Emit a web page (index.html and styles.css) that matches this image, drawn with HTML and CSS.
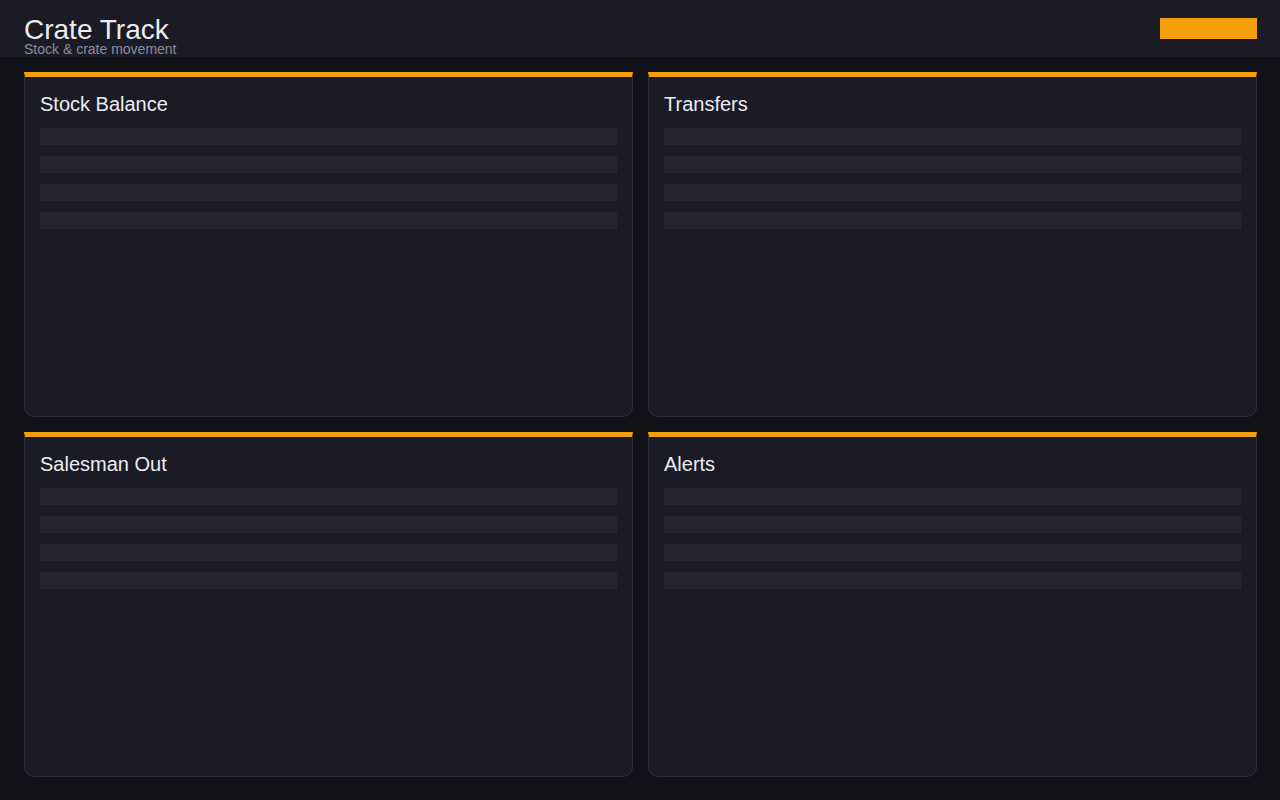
FILE: index.html
```html
<!DOCTYPE html>
<html lang="en">
<head>
<meta charset="utf-8">
<title>Crate Track</title>
<link rel="stylesheet" href="styles.css">
</head>
<body>
<header class="topbar">
  <div class="brand">
    <h1 class="brand-title">Crate Track</h1>
    <div class="brand-sub">Stock &amp; crate movement</div>
  </div>
  <button class="action" type="button"></button>
</header>
<main class="grid">
  <section class="card">
    <h2 class="card-title">Stock Balance</h2>
    <div class="rows"><div class="row"></div><div class="row"></div><div class="row"></div><div class="row"></div></div>
  </section>
  <section class="card">
    <h2 class="card-title">Transfers</h2>
    <div class="rows"><div class="row"></div><div class="row"></div><div class="row"></div><div class="row"></div></div>
  </section>
  <section class="card">
    <h2 class="card-title">Salesman Out</h2>
    <div class="rows"><div class="row"></div><div class="row"></div><div class="row"></div><div class="row"></div></div>
  </section>
  <section class="card">
    <h2 class="card-title">Alerts</h2>
    <div class="rows"><div class="row"></div><div class="row"></div><div class="row"></div><div class="row"></div></div>
  </section>
</main>
</body>
</html>
```

FILE: styles.css
```css
* { box-sizing: border-box; }
html, body {
  margin: 0;
  padding: 0;
  background: #111217;
  font-family: "Liberation Sans", Arial, sans-serif;
  color: #e8e8f0;
}
.topbar {
  height: 57px;
  background: #1b1b25;
  display: flex;
  align-items: flex-start;
  justify-content: space-between;
  padding: 17px 23px 0 24px;
}
.brand-title {
  margin: 0;
  font-size: 28px;
  font-weight: 400;
  line-height: 26px;
  color: #ececf2;
}
.brand-sub {
  font-size: 14px;
  line-height: 13px;
  color: #8b8ba0;
}
.action {
  margin-top: 1px;
  width: 97px;
  height: 21px;
  border: none;
  padding: 0;
  background: #f59e0b;
}
.grid {
  display: grid;
  grid-template-columns: 609px 609px;
  grid-template-rows: 345px 345px;
  column-gap: 15px;
  row-gap: 15px;
  padding: 15px 23px 23px 24px;
}
.card {
  background: #1b1b25;
  border: 1px solid #2c2c3a;
  border-top: 5px solid #f59e0b;
  border-radius: 0 0 10px 10px;
  padding: 16px 15px;
}
.card-title {
  margin: 0;
  font-size: 20px;
  font-weight: 400;
  line-height: 23px;
  color: #ececf2;
}
.rows {
  margin-top: 12px;
  display: flex;
  flex-direction: column;
  gap: 11px;
}
.row {
  height: 17px;
  background: #252533;
}
```
